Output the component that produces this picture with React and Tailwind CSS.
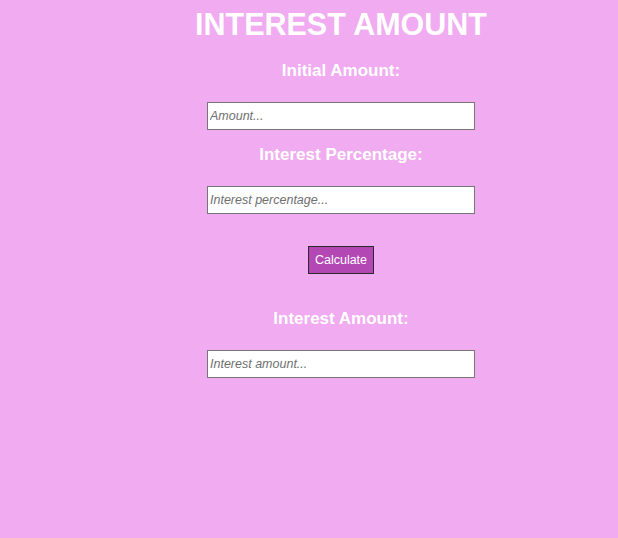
export default function App() {
  const inputCls =
    "w-[268px] h-[28px] border border-[#767676] bg-white px-[2px] text-[12.5px] text-black placeholder:text-[#6f6f6f] placeholder:italic outline-none";
  const labelCls = "text-[17px] font-bold leading-[22px] text-white";

  return (
    <div
      className="min-h-[538px] w-full bg-[#f1abf1] pl-[64px]"
      style={{ fontFamily: '"Liberation Sans", Arial, sans-serif' }}
    >
      <div className="flex flex-col items-center pt-[6px]">
        <h1 className="text-[30.5px] font-bold leading-[37px] text-white">INTEREST AMOUNT</h1>

        <h3 className={`${labelCls} mt-[17px]`}>Initial Amount:</h3>
        <input className={`${inputCls} mt-[20px]`} placeholder="Amount..." />

        <h3 className={`${labelCls} mt-[14px]`}>Interest Percentage:</h3>
        <input className={`${inputCls} mt-[20px]`} placeholder="Interest percentage..." />

        <button className="mt-[32px] h-[28px] w-[66px] border border-[#2a2a2a] bg-[#b347b4] text-[12.5px] text-white">
          Calculate
        </button>

        <h3 className={`${labelCls} mt-[34px]`}>Interest Amount:</h3>
        <input className={`${inputCls} mt-[20px]`} placeholder="Interest amount..." readOnly />
      </div>
    </div>
  );
}
